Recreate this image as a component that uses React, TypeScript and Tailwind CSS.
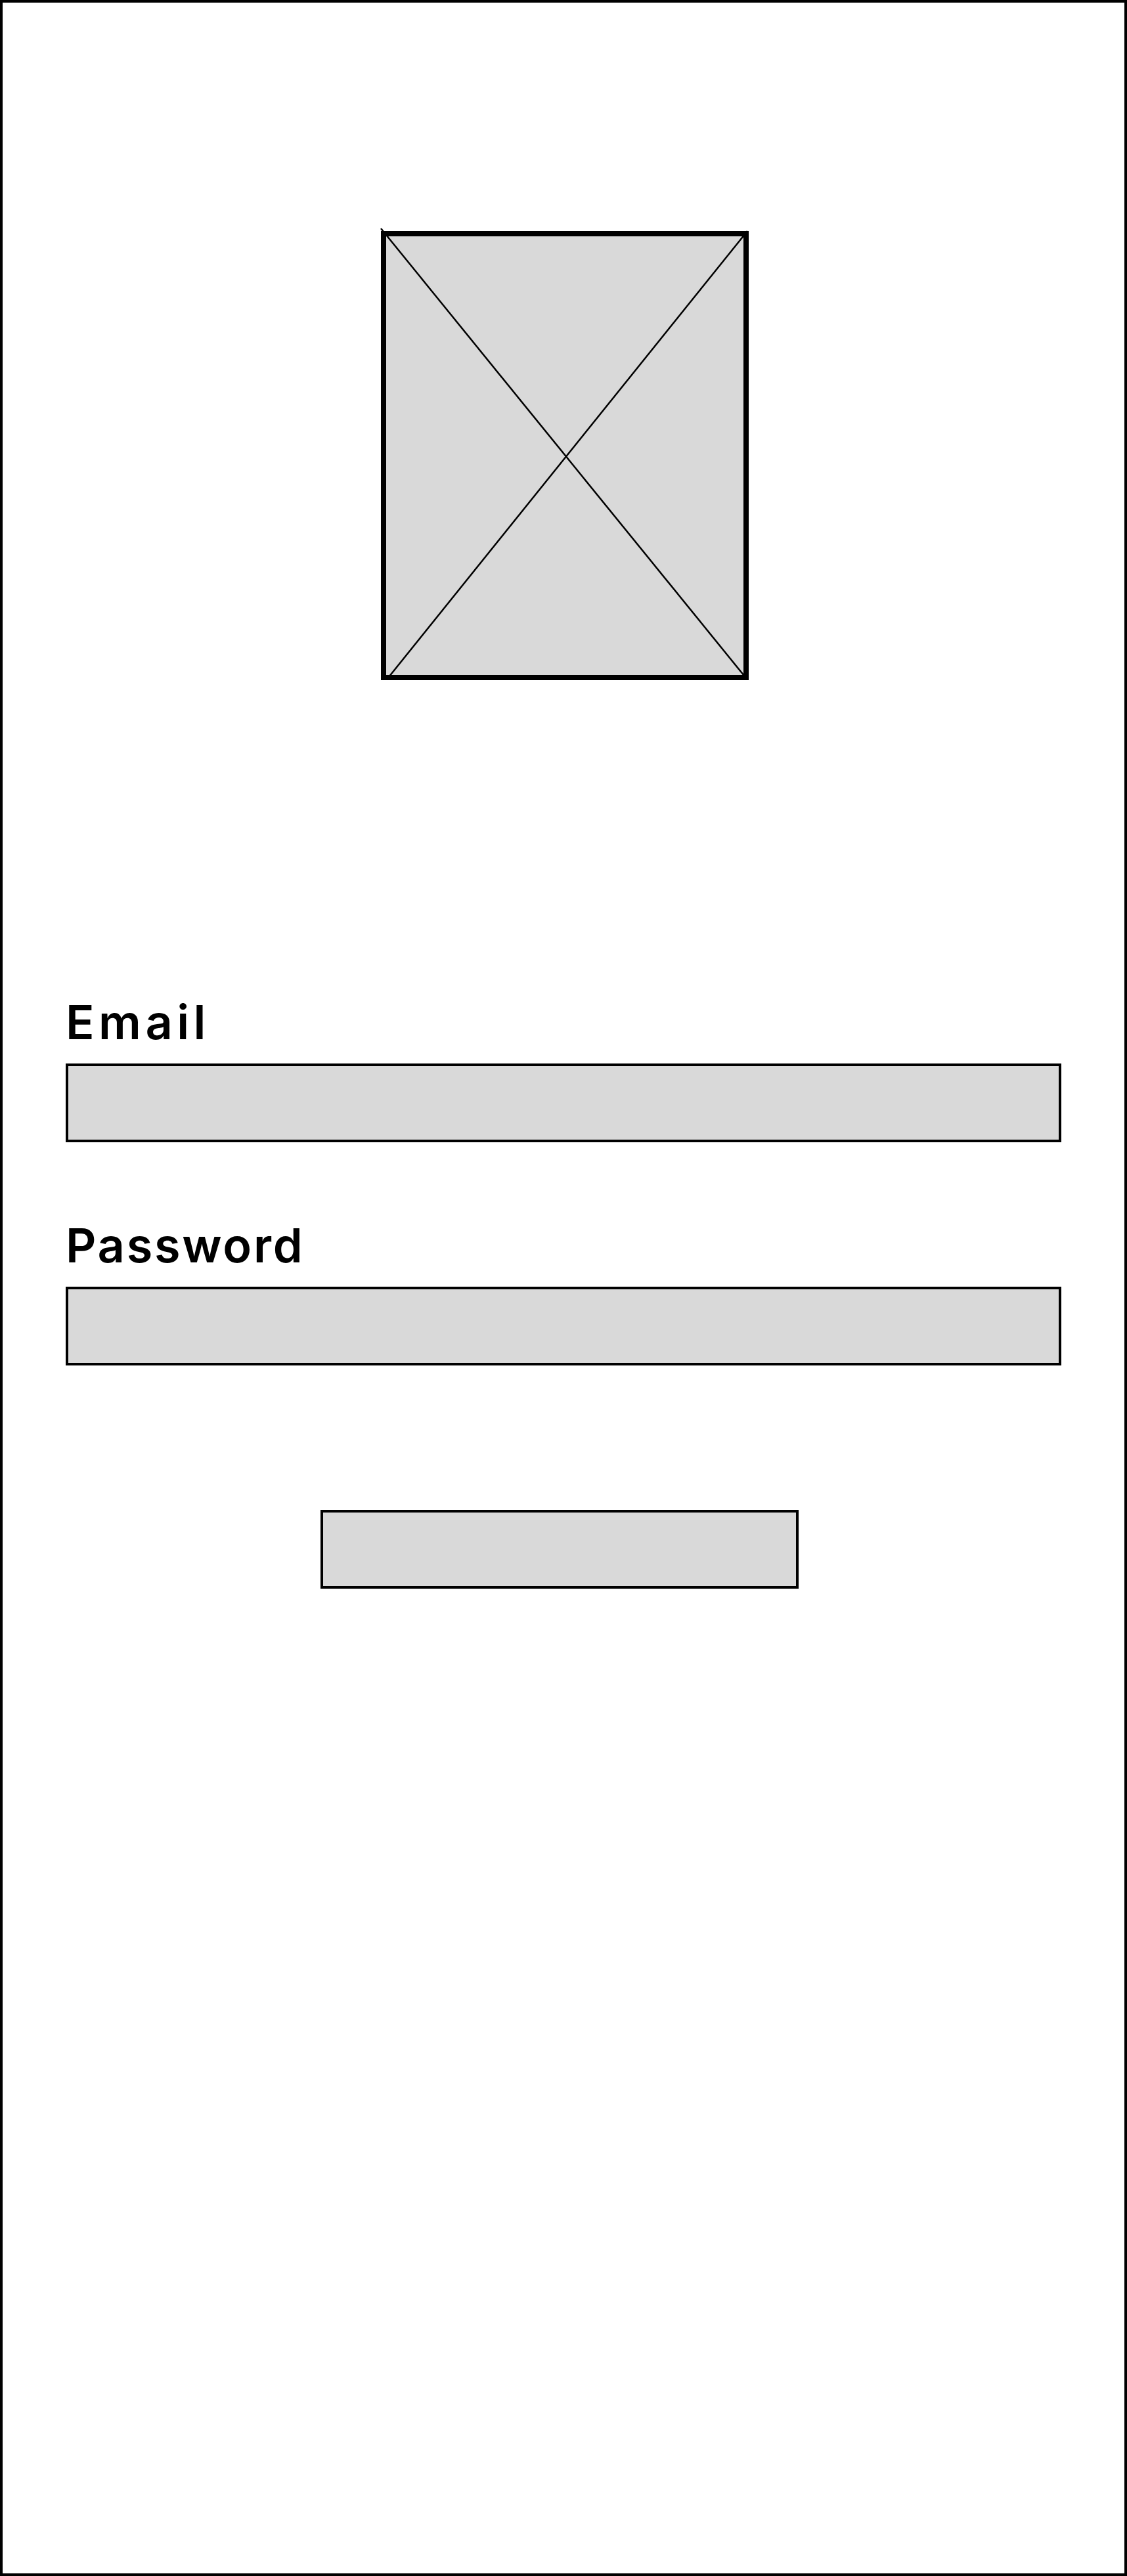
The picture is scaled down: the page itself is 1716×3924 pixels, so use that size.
export default function App() {
  return (
    <div className="w-[1716px] h-[3924px] border-4 border-black bg-white flex flex-col font-['Inter',sans-serif] text-black">
      {/* image placeholder */}
      <div className="relative mx-auto mt-[348px] w-[560px] h-[684px] border-8 border-black bg-[#d9d9d9] translate-x-[2px]">
        <svg
          className="absolute -left-[8px] -top-[8px] w-[560px] h-[684px] overflow-visible"
          viewBox="0 0 560 684"
        >
          <line x1="0" y1="-4" x2="552" y2="676" stroke="black" strokeWidth="2.5" />
          <line x1="558" y1="0" x2="13" y2="678" stroke="black" strokeWidth="2.5" />
        </svg>
      </div>

      <div className="px-[96px] flex flex-col">
        <label className="mt-[485px] text-[72px] leading-[72px] font-semibold tracking-[6.5px]">Email</label>
        <div className="mt-[27px] h-[120px] border-4 border-black bg-[#d9d9d9]" />

        <label className="mt-[121px] text-[72px] leading-[72px] font-semibold tracking-[2.75px]">Password</label>
        <div className="mt-[27px] h-[120px] border-4 border-black bg-[#d9d9d9]" />

        <button className="mt-[220px] mx-auto w-[728px] h-[120px] border-4 border-black bg-[#d9d9d9] -translate-x-[6px]" />
      </div>
    </div>
  );
}
